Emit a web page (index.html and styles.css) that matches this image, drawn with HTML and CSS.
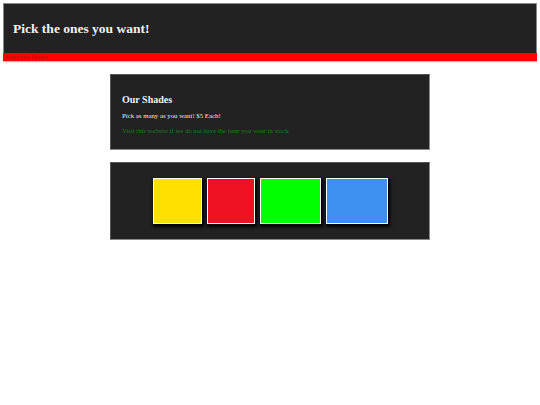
FILE: index.html
```html
<!DOCTYPE html>
<html>
<head>
<meta charset="utf-8">
<link rel="stylesheet" href="styles.css">
</head>
<body>
<header class="top">
  <h1 class="title">Pick the ones you want!</h1>
</header>
<div class="redbar">Some Hot Shades</div>
<main class="main">
  <section class="card info">
    <h2 class="heading">Our Shades</h2>
    <p class="text">Pick as many as you want! $5 Each!</p>
    <p class="link">Visit this website if we do not have the item you want in stock</p>
  </section>
  <section class="card shades">
    <span class="swatch yellow"></span>
    <span class="swatch red"></span>
    <span class="swatch green"></span>
    <span class="swatch blue"></span>
  </section>
</main>
</body>
</html>
```

FILE: styles.css
```css
html, body {
  margin: 0;
  padding: 0;
  background: #ffffff;
}
body {
  padding: 3px;
  font-family: "Liberation Serif", "Times New Roman", serif;
}
.top {
  background: #222222;
  border: 1px solid #8a8a8a;
  border-bottom: none;
  height: 49px;
  display: flex;
  align-items: center;
  padding-left: 9px;
}
.title {
  margin: 0;
  color: #f2f2f2;
  font-size: 13.5px;
  font-weight: bold;
}
.redbar {
  background: #ff0000;
  height: 8px;
  font-size: 6px;
  line-height: 8px;
  color: #9a2400;
  padding-left: 2px;
  box-shadow: 0 1px 1px rgba(255,80,80,0.5);
}
.main {
  display: flex;
  flex-direction: column;
  align-items: center;
  gap: 12px;
  padding-top: 13px;
}
.card {
  background: #222222;
  border: 1px solid #8a8a8a;
  border-top-color: #555;
  border-left-color: #555;
}
.info {
  height: 76px;
  padding: 0 11px;
  box-sizing: border-box;
  width: 320px;
  padding-top: 19px;
}
.heading {
  margin: 0;
  color: #f2f2f2;
  font-size: 10px;
  font-weight: bold;
  line-height: 12px;
}
.text {
  margin: 5px 0 0 0;
  color: #e8e8e8;
  font-size: 6.8px;
  line-height: 9px;
}
.link {
  margin: 6px 0 0 0;
  color: #1f7a1f;
  font-size: 6.7px;
  line-height: 9px;
}
.shades {
  width: 320px;
  box-sizing: border-box;
  height: 78px;
  display: flex;
  justify-content: center;
  align-items: flex-start;
  gap: 5px;
  padding-top: 15px;
}
.swatch {
  display: block;
  height: 44px;
  border: 1px solid #ffffff;
  box-sizing: content-box;
  box-shadow: 1px 2px 3px 1px #000000;
}
.yellow { width: 47px; background: #ffe000; }
.red { width: 46px; background: #ee1122; }
.green { width: 59px; background: #00ff00; }
.blue { width: 60px; background: #3d8ff0; }
```
